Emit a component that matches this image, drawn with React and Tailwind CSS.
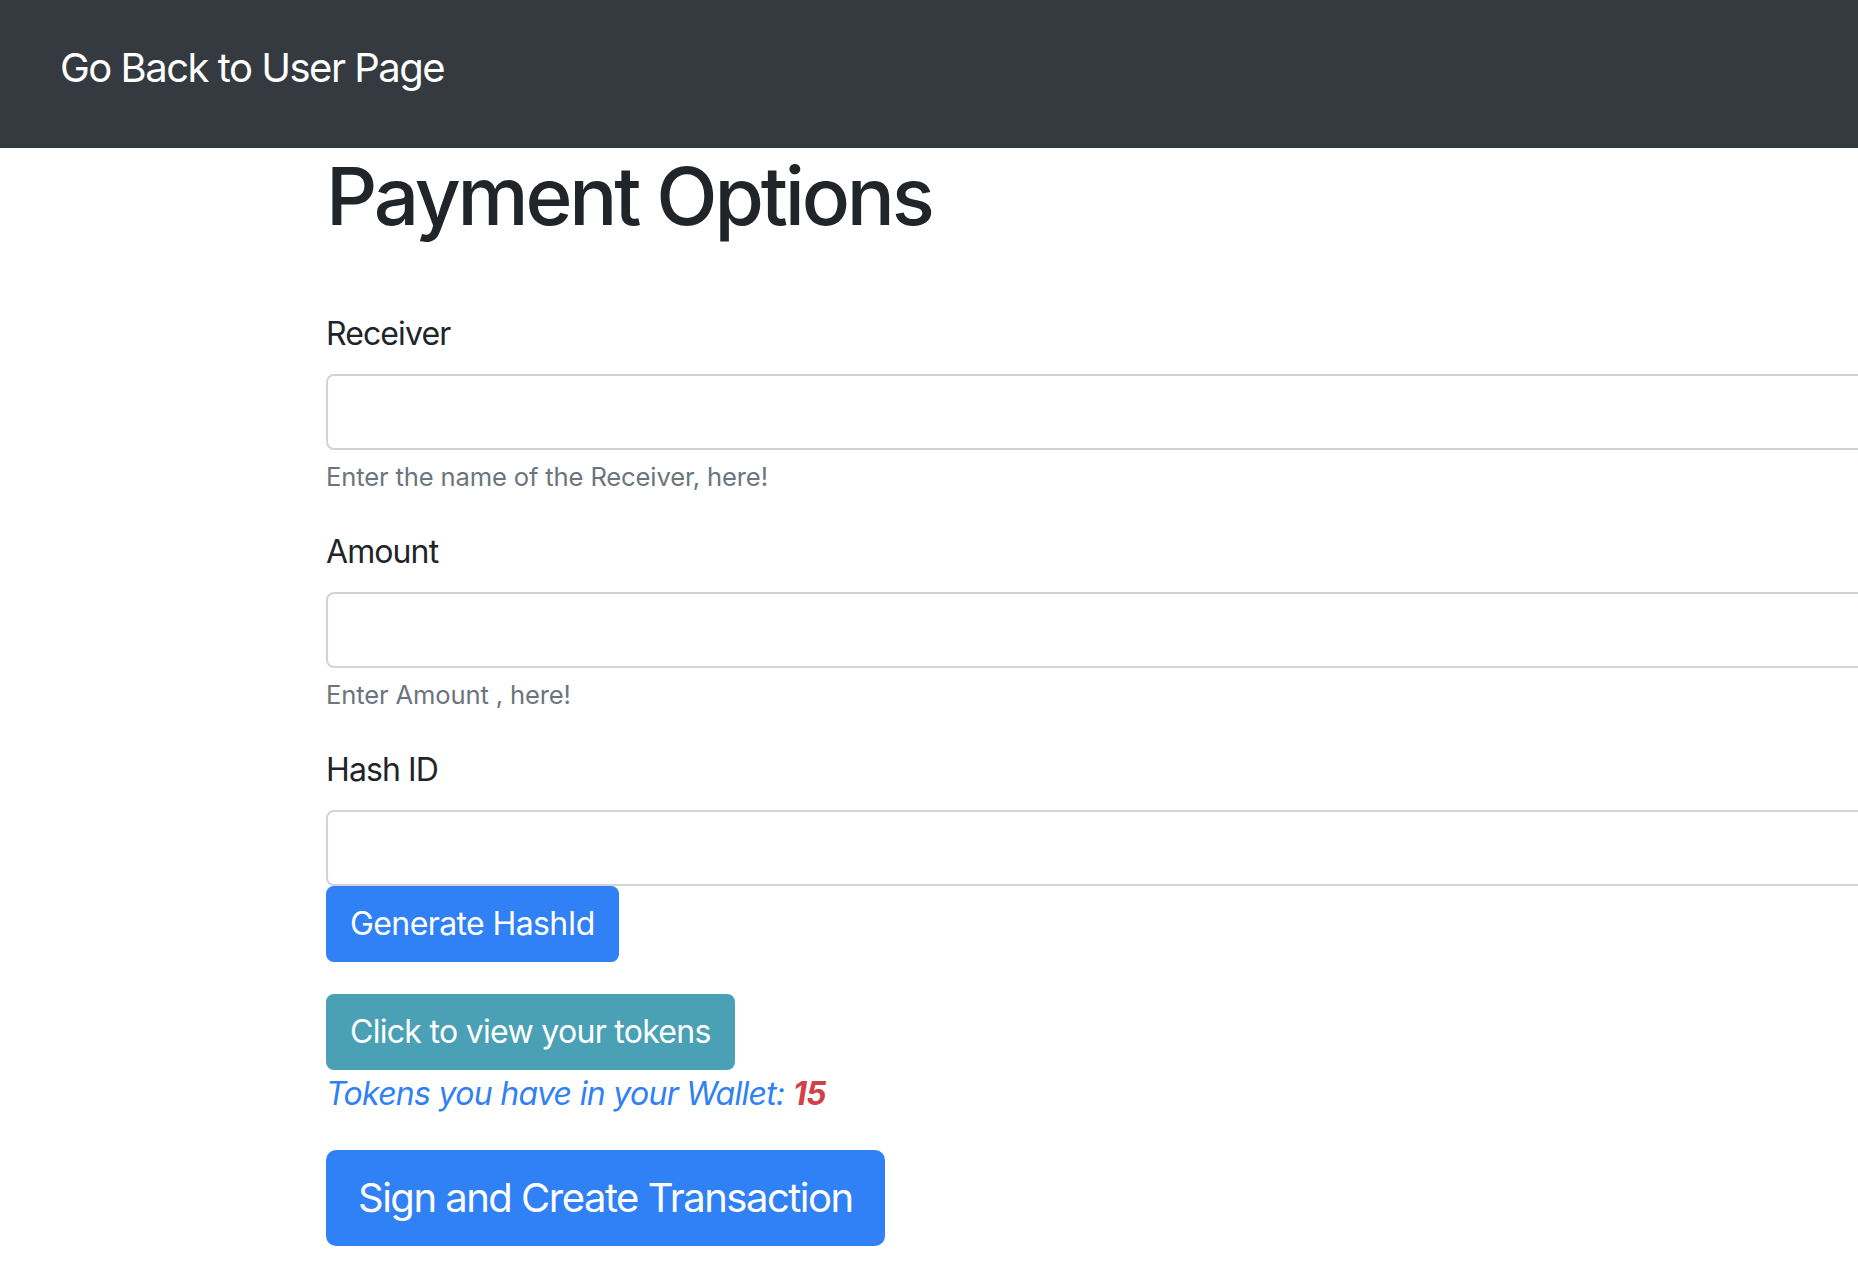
import React, { useState } from 'react';

const fieldClass =
  'block w-[1600px] h-[76px] px-6 text-[32px] bg-white border-2 border-[#ced4da] rounded-[8px] outline-none';

const Field = ({ label, hint, value, onChange }) => (
  <div className={hint ? 'mb-8' : ''}>
    <label className="block text-[32px] leading-[48px] tracking-[-0.9px] mb-4 text-[#212529]">{label}</label>
    <input className={fieldClass} value={value} onChange={(e) => onChange(e.target.value)} />
    {hint && (
      <small className="block mt-2 text-[25.6px] leading-[38px] tracking-[-0.15px] text-[#6c757d]">{hint}</small>
    )}
  </div>
);

const App = () => {
  const [receiver, setReceiver] = useState('');
  const [amount, setAmount] = useState('');
  const [hashId, setHashId] = useState('');
  const tokens = 15;

  return (
    <div className="min-h-screen overflow-hidden bg-white text-[#212529]" style={{ fontFamily: 'Inter, "Noto Sans", sans-serif' }}>
      <nav className="h-[148px] bg-[#343a40] flex items-start pt-[38px] px-[60px]">
        <a href="#" className="text-white text-[40px] leading-[60px] tracking-[-1.5px]">
          Go Back to User Page
        </a>
      </nav>

      <div className="pl-[326px]">
        <h1 className="text-[80px] leading-[96px] font-medium tracking-[-3.2px]">Payment Options</h1>

        <form className="mt-[66px]" onSubmit={(e) => e.preventDefault()}>
          <Field
            label="Receiver"
            hint="Enter the name of the Receiver, here!"
            value={receiver}
            onChange={setReceiver}
          />
          <Field label="Amount" hint="Enter Amount , here!" value={amount} onChange={setAmount} />
          <Field label="Hash ID" value={hashId} onChange={setHashId} />

          <button
            type="button"
            onClick={() => setHashId(Math.random().toString(16).slice(2))}
            className="h-[76px] px-6 text-[32px] tracking-[-0.6px] text-white bg-[#3080f6] rounded-[8px]"
          >
            Generate HashId
          </button>

          <div className="mt-8">
            <button
              type="button"
              className="h-[76px] px-6 text-[32px] tracking-[-0.7px] text-white bg-[#4aa1b5] rounded-[8px]"
            >
              Click to view your tokens
            </button>
            <p className="text-[32px] leading-[48px] italic tracking-[-0.7px] text-[#3080f6]">
              Tokens you have in your Wallet: <b className="text-[#d23f47]">{tokens}</b>
            </p>
          </div>

          <button
            type="submit"
            className="mt-8 h-[96px] px-8 text-[40px] tracking-[-1.5px] text-white bg-[#3080f6] rounded-[10px]"
          >
            Sign and Create Transaction
          </button>
        </form>
      </div>
    </div>
  );
};

export default App;
